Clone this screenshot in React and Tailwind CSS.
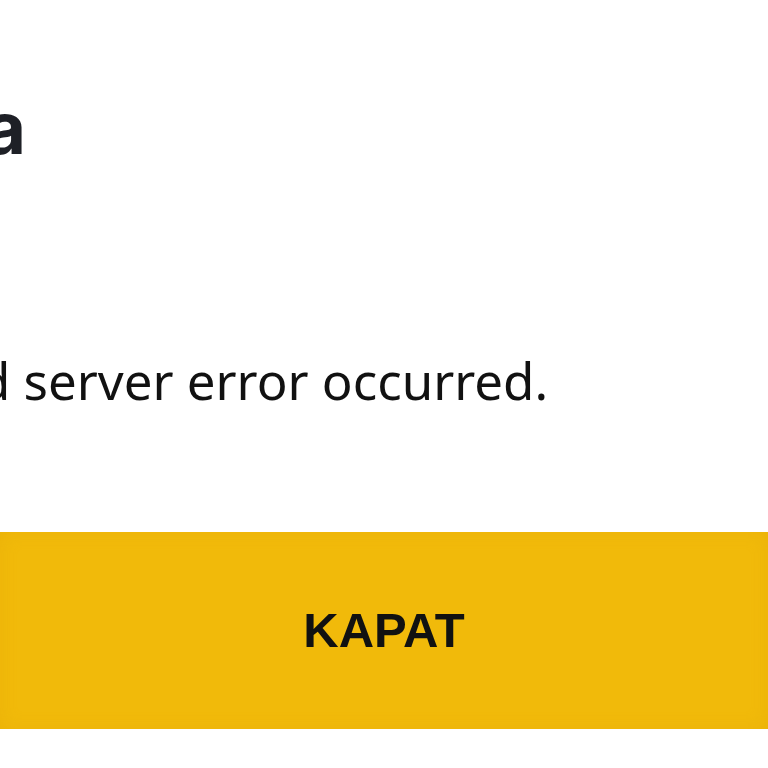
export default function App() {
  return (
    <div className="h-[768px] w-[768px] overflow-hidden bg-white">
      <div className="flex flex-col">
        <h1 className="-ml-[138px] mt-[86px] whitespace-nowrap font-['Inter',sans-serif] text-[72px] font-bold leading-[84px] text-[#1e2026]">
          Hata
        </h1>
        <p className="-ml-[348px] mt-[178px] whitespace-nowrap font-['Noto_Sans',sans-serif] text-[51px] leading-[64px] text-[#111111]">
          An unexpected server error occurred.
        </p>
        <button className="mt-[120px] flex h-[197px] w-full items-center justify-center bg-[#f1ba0a] font-['Liberation_Sans',sans-serif] text-[49px] font-bold text-[#111111] shadow-[inset_0_0_18px_rgba(214,150,0,0.2)]">
          KAPAT
        </button>
      </div>
    </div>
  );
}
